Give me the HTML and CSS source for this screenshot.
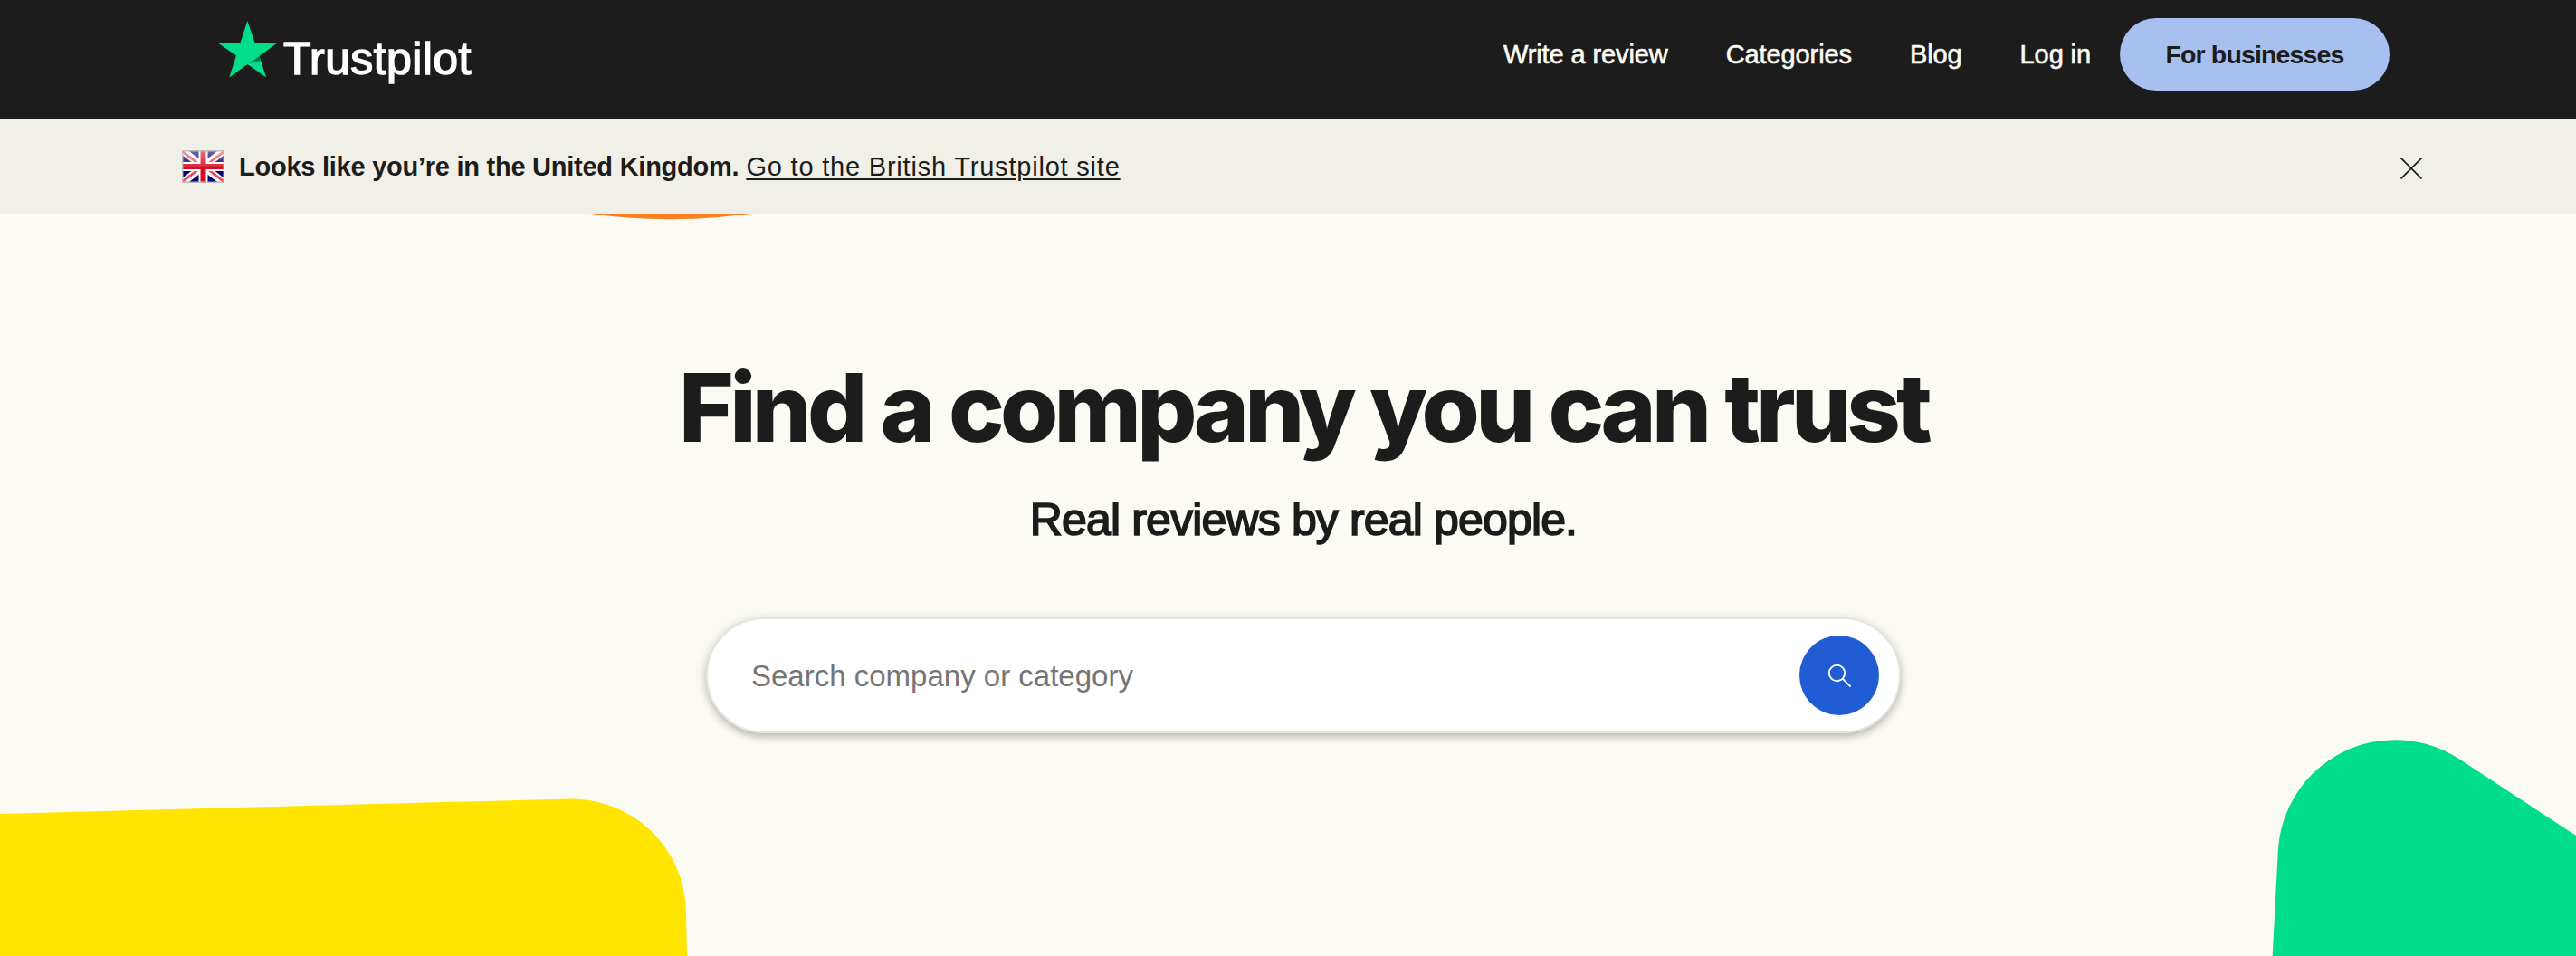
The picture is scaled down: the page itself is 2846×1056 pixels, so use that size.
FILE: index.html
```html
<!DOCTYPE html>
<html lang="en">
<head>
    <meta charset="UTF-8">
    <meta name="viewport" content="width=device-width, initial-scale=1.0">
    <title>Trustpilot Reviews</title>
    <link rel="stylesheet" href="styles.css">
</head>
<body>
    <header class="header">
        <a class="logo">
            <svg class="logo-star" width="67" height="63" viewBox="0 0 67 63">
                <path fill="#00dd8b" d="M33.4 0 41.5 24H67L46.5 39 54.2 62.5 33.4 48 13.2 62.5 21 38.5 0 24H25.5Z"/>
                <path fill="#00784f" d="M35 47 46.5 39 48 44Z"/>
            </svg>
            <span class="logo-text">Trustpilot</span>
        </a>
        <nav class="nav">
            <a class="nav-link nav-write">Write a review</a>
            <a class="nav-link nav-categories">Categories</a>
            <a class="nav-link nav-blog">Blog</a>
            <a class="nav-link nav-login">Log in</a>
            <a class="business-button">For businesses</a>
        </nav>
    </header>

    <div class="banner">
        <svg class="flag" width="47" height="36" viewBox="0 0 47 36">
            <defs>
                <linearGradient id="shine" x1="0" y1="0" x2="0" y2="1">
                    <stop offset="0" stop-color="#fff" stop-opacity=".42"/>
                    <stop offset=".5" stop-color="#fff" stop-opacity=".12"/>
                    <stop offset=".5" stop-color="#fff" stop-opacity="0"/>
                </linearGradient>
            </defs>
            <path fill="#00006b" d="M0 0H47V36H0Z"/>
            <path stroke="#fff" stroke-width="8" d="M0 0 47 36M47 0 0 36"/>
            <path stroke="#f04a50" stroke-width="2.8" d="M0 1 23 18.500M47 1 24 18.500M0 35 23 17.500M47 35 24 17.500"/>
            <path stroke="#fff" stroke-width="10" d="M23.500 0V36M0 18H47"/>
            <path stroke="#d80a20" stroke-width="6" d="M23.500 0V36M0 18H47"/>
            <path fill="url(#shine)" d="M0 0H47V36H0Z"/>
            <path fill="none" stroke="#bbb" stroke-width="1.500" d="M.7 .7H46.300V35.300H.7Z"/>
        </svg>
        <p class="banner-text"><strong class="banner-strong">Looks like you’re in the United Kingdom.</strong> <a class="banner-link">Go to the British Trustpilot site</a></p>
        <svg class="close" width="24" height="24" viewBox="0 0 24 24">
            <path stroke="#1c1c1c" stroke-width="1.700" d="M.5 .5 23.500 23.500M23.500 .5 .5 23.500"/>
        </svg>
    </div>

    <main class="hero">
        <!-- Background shapes -->
        <svg class="shapes" width="2880" height="820" viewBox="0 236 2880 820">
            <path fill="#ff7f1e" d="M652 236Q740 248.500 830 236Z"/>
            <path fill="#ffe500" d="M0 899 629 882.500A126.500 126.500 0 0 1 758 1007L759 1056H0Z"/>
            <path fill="#00dd8b" d="M2510.700 1056 2516.800 940A129.500 129.500 0 0 1 2718 839L2846 923 2880 945.300V1056Z"/>
        </svg>
        <h1 class="title">Find a company you can trust</h1>
        <p class="subtitle">Real reviews by real people.</p>
        <form class="search">
            <input class="search-input" type="text" placeholder="Search company or category">
            <button class="search-button" type="button" aria-label="Search">
                <svg width="28" height="28" viewBox="0 0 28 28" fill="none" stroke="#fff" stroke-width="1.900">
                    <circle cx="11.500" cy="11.500" r="8.700"/>
                    <path d="M17.700 17.700 26.500 26.500"/>
                </svg>
            </button>
        </form>
    </main>
</body>
</html>
```
FILE: styles.css
```css
* {
    box-sizing: border-box;
}

html {
    overflow: hidden;
}

body {
    width: 2880px;
    height: 1056px;
    margin: 0;
    overflow: hidden;
    background-color: #fcfbf3;
    color: #1c1c1c;
    font-family: "Liberation Sans", Arial, sans-serif;
    font-size: 29px;
}

.header {
    display: flex;
    align-items: flex-start;
    justify-content: space-between;
    height: 132px;
    padding: 20px 240px 0;
    background-color: #1c1c1c;
}

.logo {
    display: flex;
    padding-top: 3px;
    gap: 6px;
}

.logo-text {
    padding-top: 12px;
    color: #fff;
    font-size: 50px;
    line-height: 60px;
    letter-spacing: 0.4px;
    -webkit-text-stroke: 1.5px #fff;
}

.nav {
    display: flex;
    align-items: center;
    height: 80px;
}

.nav-link {
    margin-right: 64px;
    padding-top: 1px;
    color: #fcfbf3;
    letter-spacing: -0.1px;
    -webkit-text-stroke: 0.6px #fcfbf3;
    white-space: nowrap;
}

.nav-login {
    margin-right: 32px;
}

.business-button {
    width: 298px;
    height: 80px;
    border-radius: 40px;
    background-color: #a7c0f0;
    font-size: 28.5px;
    font-weight: bold;
    line-height: 81px;
    letter-spacing: -0.85px;
    text-align: center;
}

.banner {
    display: flex;
    align-items: center;
    height: 104px;
    padding: 0 204px 0 201px;
    background-color: #f1f0e8;
}

.banner-text {
    flex: 1;
    margin: 1px 0 0 16px;
    white-space: nowrap;
}

.banner-strong {
    letter-spacing: -0.25px;
}

.banner-link {
    letter-spacing: 0.8px;
    text-decoration: underline;
    text-decoration-thickness: 2px;
    text-underline-offset: 3px;
}

.close {
    margin-top: 4px;
}

.hero {
    position: relative;
    display: flex;
    flex-direction: column;
    align-items: center;
    height: 820px;
    padding-top: 154px;
}

.shapes {
    position: absolute;
    top: 0;
    left: 0;
}

.title {
    z-index: 1;
    margin: 0;
    font-family: Inter, sans-serif;
    font-size: 104px;
    font-weight: 800;
    line-height: 120px;
    letter-spacing: -4.8px;
    word-spacing: 1px;
    white-space: nowrap;
}

.subtitle {
    z-index: 1;
    margin: 34px 0 78px;
    font-size: 50px;
    line-height: 60px;
    letter-spacing: -0.85px;
    -webkit-text-stroke: 1.7px #1c1c1c;
}

.search {
    z-index: 1;
    display: flex;
    align-items: center;
    width: 1320px;
    height: 128px;
    padding: 0 22px 0 48px;
    border: 2px solid #e5e5dd;
    border-radius: 64px;
    background-color: #fff;
    box-shadow: 0 4px 8px rgba(28, 28, 28, 0.28), 0 0 16px rgba(28, 28, 28, 0.06);
}

.search-input {
    flex: 1;
    padding: 2px 0 0;
    border: 0;
    outline: 0;
    background: none;
    font-family: inherit;
    font-size: 33px;
}

.search-input::placeholder {
    color: #757575;
}

.search-button {
    display: flex;
    align-items: center;
    justify-content: center;
    width: 88px;
    height: 88px;
    padding: 0;
    border: 0;
    border-radius: 50%;
    background-color: #205cd4;
}
```
